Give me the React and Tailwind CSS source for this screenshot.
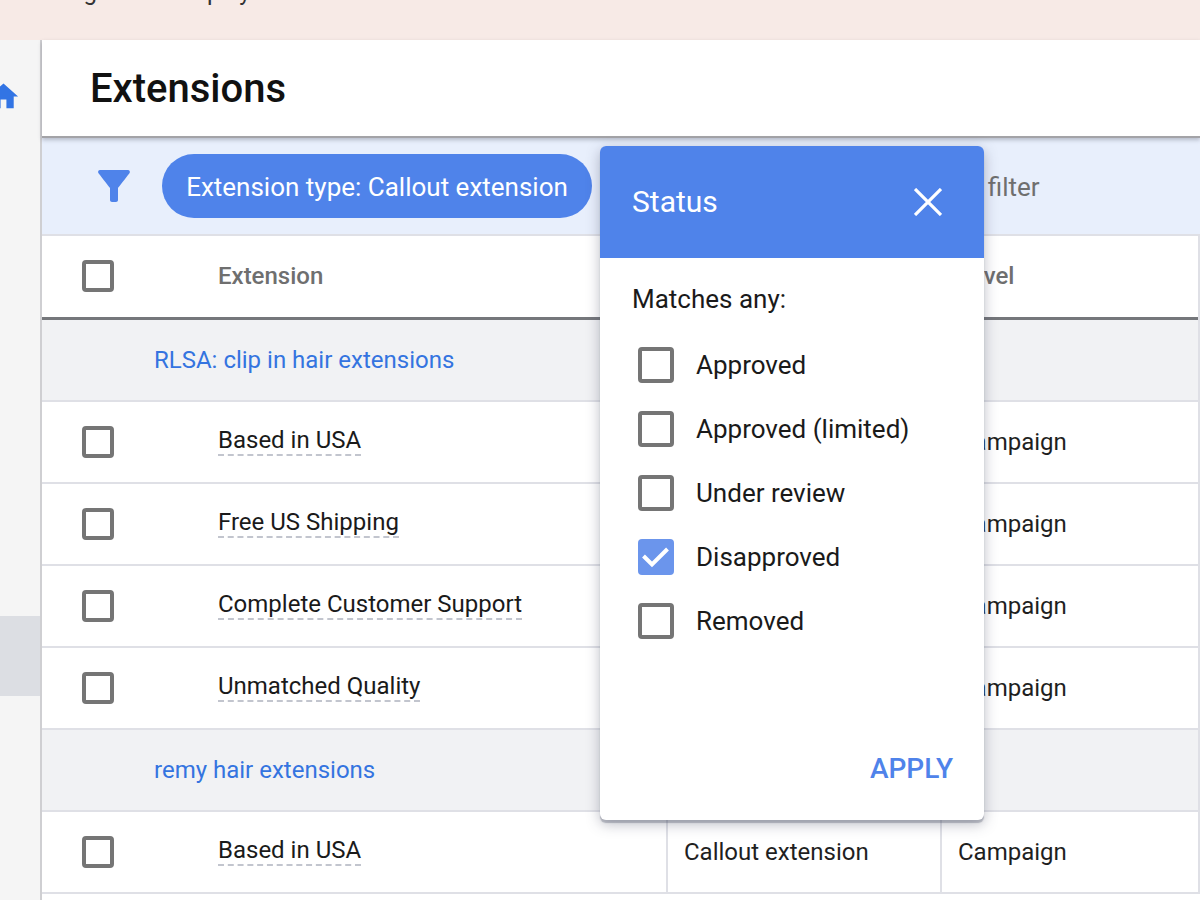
const font = { fontFamily: "Roboto, sans-serif" };

function Box({ size = "w-8 h-8" }) {
  return <span className={`${size} block shrink-0 border-4 border-[#757575] rounded-[4px] bg-white`} />;
}

function GroupRow({ label }) {
  return (
    <div className="h-[82px] border-b-2 border-[#dfe0e6] bg-[#f1f2f4] flex items-center pl-[112px] text-[24px] text-[#3474e0]">
      {label}
    </div>
  );
}

function Row({ label }) {
  return (
    <div className="h-[82px] border-b-2 border-[#dfe0e6] grid grid-cols-[626px_274px_1fr] bg-white">
      <div className="flex items-center pl-10 border-r-2 border-[#dfe0e6]">
        <Box />
        <span className="ml-[104px] text-[24px] pt-[2px] leading-[28px] text-[#1a1a1a] border-b-2 border-dashed border-[#c2c5ce] -mt-[4px]">{label}</span>
      </div>
      <div className="flex items-center pl-4 text-[24px] text-[#1f1f1f] border-r-2 border-[#dfe0e6]">Callout extension</div>
      <div className="flex items-center pl-4 text-[24px] text-[#1f1f1f]">Campaign</div>
    </div>
  );
}

function Option({ label, checked }) {
  return (
    <div className="h-16 flex items-center pl-[6px] text-[26px] text-[#1a1a1a]">
      {checked ? (
        <span className="w-9 h-9 shrink-0 rounded-[4px] bg-[#6b95ec] flex items-center justify-center">
          <svg width="32" height="32" viewBox="0 0 32 32" fill="none" stroke="#fff" strokeWidth="4">
            <path d="M3.5 15 L12 23.5 L27.5 8" />
          </svg>
        </span>
      ) : (
        <Box size="w-9 h-9" />
      )}
      <span className="ml-[22px]">{label}</span>
    </div>
  );
}

export default function App() {
  return (
    <div style={font} className="relative w-[1200px] h-[900px] overflow-hidden bg-white">
      <div className="h-10 bg-[#f7eae6] overflow-hidden">
        <div className="-mt-[23px] pl-[10px] text-[24px] leading-[30px] text-[#333] whitespace-nowrap">
          Running ads to display them and then be added to the list that was shown
        </div>
      </div>
      <div className="flex h-[860px]">
        <aside className="w-[42px] shrink-0 bg-[#f5f5f5] border-r-2 border-[#cfcfd2] pt-4 overflow-hidden">
          <div className="h-20 flex items-center">
            <svg className="-ml-[14px] shrink-0" width="35" height="35" viewBox="0 0 24 24" fill="#3274e4">
              <path d="M10 20v-6h4v6h5v-8h3L12 3 2 12h3v8z" />
            </svg>
          </div>
          <div className="h-20 flex items-center">
            <span className="-ml-[10px] text-[20px] text-[#555]">s</span>
          </div>
          <div className="h-20" />
          <div className="h-20" />
          <div className="h-20" />
          <div className="h-20" />
          <div className="h-20" />
          <div className="h-20 bg-[#dcdee3]" />
        </aside>
        <main className="flex-1 min-w-0">
          <header className="relative z-10 h-[98px] bg-white border-b-2 border-[#a3a3a7] shadow-[0_2px_4px_rgba(60,64,80,0.3)] flex items-center pl-[48px]">
            <h1 className="text-[40px] leading-[48px] font-medium text-[#111] mt-[2px]">Extensions</h1>
          </header>
          <div className="h-[98px] bg-[#e8effc] border-b-2 border-[#dfe0e6] flex items-center pl-[48px]">
            <svg className="shrink-0" width="48" height="48" viewBox="0 0 24 24" fill="#4f83ea">
              <path d="M4.25 5.61C6.27 8.2 10 13 10 13v6c0 .55.45 1 1 1h2c.55 0 1-.45 1-1v-6s3.72-4.8 5.74-7.39c.51-.66.04-1.61-.79-1.61H5.04c-.83 0-1.3.95-.79 1.61z" />
            </svg>
            <div className="ml-6 h-16 w-[430px] shrink-0 rounded-full bg-[#4f83ea] text-white text-[26px] flex items-center justify-center">
              <span className="pt-[2px]">Extension type: Callout extension</span>
            </div>
            <span className="ml-[343px] pt-[2px] text-[26px] text-[#6f6f6f]">Add filter</span>
          </div>
          <div className="border-r-2 border-[#dfe0e6]">
            <div className="h-[84px] pb-[2px] border-b-[3px] border-[#75777b] grid grid-cols-[626px_274px_1fr] text-[24px] font-medium text-[#6f6f6f] bg-white">
              <div className="flex items-center pl-10">
                <Box />
                <span className="ml-[104px]">Extension</span>
              </div>
              <div className="flex items-center pl-4">Type</div>
              <div className="flex items-center pl-4">Level</div>
            </div>
            <GroupRow label="RLSA: clip in hair extensions" />
            <Row label="Based in USA" />
            <Row label="Free US Shipping" />
            <Row label="Complete Customer Support" />
            <Row label="Unmatched Quality" />
            <GroupRow label="remy hair extensions" />
            <Row label="Based in USA" />
          </div>
        </main>
      </div>

      <div className="absolute z-20 left-[600px] top-[146px] w-[384px] h-[674px] bg-white rounded-[6px] overflow-hidden shadow-[0_3px_1px_rgba(80,85,105,0.35),0_4px_14px_rgba(60,64,90,0.35)] flex flex-col">
        <div className="h-[112px] shrink-0 bg-[#4f83ea] flex items-center justify-between pl-8 pr-[42px] text-white text-[30px]">
          <span className="-mt-[2px]">Status</span>
          <svg width="28" height="28" viewBox="0 0 28 28" stroke="#fff" strokeWidth="3.2" fill="none">
            <path d="M1 1 L27 27 M27 1 L1 27" />
          </svg>
        </div>
        <div className="pl-8 pt-[25px] text-[26px] leading-[32px] text-[#1a1a1a]">Matches any:</div>
        <div className="mt-[18px] pl-8">
          <Option label="Approved" />
          <Option label="Approved (limited)" />
          <Option label="Under review" />
          <Option label="Disapproved" checked />
          <Option label="Removed" />
        </div>
        <div className="mt-auto pb-[30px] pr-[31px] text-right text-[28px] font-medium text-[#4f83ea]">APPLY</div>
      </div>
    </div>
  );
}
